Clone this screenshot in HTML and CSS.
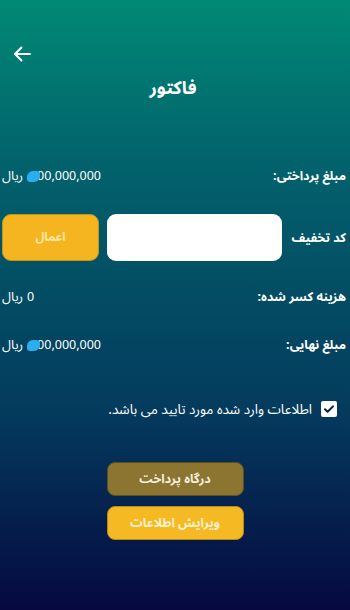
FILE: index.html
```html
<!DOCTYPE html>
<html lang="fa" dir="rtl">
<head>
    <meta charset="UTF-8">
    <meta name="viewport" content="width=device-width, initial-scale=1.0">
    <title>فاکتور</title>
    <link rel="stylesheet" href="styles.css">
</head>
<body>
    <div class="page">
        <div class="topbar">
            <button class="back-button" aria-label="بازگشت">
                <svg width="20" height="20" viewBox="0 0 20 20" fill="none" stroke="#ffffff" stroke-width="2" stroke-linecap="round" stroke-linejoin="round">
                    <path d="M18 10H3"/>
                    <path d="M9.5 3.5L3 10l6.5 6.5"/>
                </svg>
            </button>
        </div>

        <h1 class="title">فاکتور</h1>

        <div class="row first">
            <span class="label">مبلغ پرداختی:</span>
            <span class="value"><span class="unit">ریال</span><span class="blob"></span><span class="num">00,000,000</span></span>
        </div>

        <div class="row coupon">
            <span class="label">کد تخفیف</span>
            <input class="coupon-input" type="text">
            <button class="apply-button">اعمال</button>
        </div>

        <div class="row">
            <span class="label">هزینه کسر شده:</span>
            <span class="value"><span class="unit">ریال</span><span class="num">0</span></span>
        </div>

        <div class="row">
            <span class="label">مبلغ نهایی:</span>
            <span class="value"><span class="unit">ریال</span><span class="blob"></span><span class="num">00,000,000</span></span>
        </div>

        <label class="confirm">
            <span class="checkbox">
                <svg width="12" height="12" viewBox="0 0 12 12" fill="none" stroke="#0b1f45" stroke-width="2" stroke-linecap="round" stroke-linejoin="round">
                    <path d="M2 6.2l2.6 2.6L10 3.4"/>
                </svg>
            </span>
            <span>اطلاعات وارد شده مورد تایید می باشد.</span>
        </label>

        <div class="actions">
            <button class="action-button pay">درگاه پرداخت</button>
            <button class="action-button edit">ویرایش اطلاعات</button>
        </div>
    </div>
</body>
</html>
```

FILE: styles.css
```css
body {
    margin: 0;
    padding: 0;
    font-family: 'Noto Sans Arabic', 'Noto Naskh Arabic', 'DejaVu Sans', sans-serif;
    color: #ffffff;
}

.page {
    height: 610px;
    background: linear-gradient(180deg, #008a74 0%, #02646d 25%, #034b63 50%, #043a5d 68%, #06083f 100%);
    overflow: hidden;
}

.topbar {
    direction: ltr;
    padding: 42px 0 0 12px;
    height: 20px;
}

.back-button {
    background: none;
    border: none;
    padding: 0;
    width: 20px;
    height: 20px;
    cursor: pointer;
}

.title {
    margin: 14px 0 0 0;
    padding-right: 4px;
    text-align: center;
    font-size: 18px;
    font-weight: bold;
    line-height: 24px;
}

.row {
    display: flex;
    justify-content: space-between;
    align-items: center;
    padding: 0 4px 0 2px;
    height: 24px;
    margin-top: 24px;
    font-size: 12.5px;
}

.row.first {
    margin-top: 64px;
}

.label {
    font-weight: bold;
    white-space: nowrap;
}

.value {
    display: flex;
    direction: ltr;
    align-items: center;
    font-size: 12.5px;
}

.unit {
    margin-right: 4px;
    font-size: 13px;
}

.blob {
    display: inline-block;
    width: 13px;
    height: 11px;
    margin-right: -3px;
    background: #2aaef0;
    border-radius: 6px 4px 6px 3px;
    position: relative;
    z-index: 1;
}

.row.coupon {
    height: 47px;
    margin-top: 26px;
    gap: 8px;
}

.row.coupon .label {
    flex: 1;
}

.coupon-input {
    width: 175px;
    height: 47px;
    box-sizing: border-box;
    border: none;
    border-radius: 9px;
    background: #ffffff;
    margin: 0;
}

.apply-button {
    width: 97px;
    height: 47px;
    border: 1px solid #c7921a;
    border-radius: 9px;
    background: #f4b521;
    color: #fbe7a6;
    font-family: inherit;
    font-size: 12px;
    font-weight: bold;
    cursor: pointer;
}

.confirm {
    display: flex;
    align-items: center;
    gap: 9px;
    height: 24px;
    margin-top: 40px;
    padding-right: 13px;
    font-size: 13.5px;
}

.checkbox {
    display: flex;
    justify-content: center;
    align-items: center;
    width: 16px;
    height: 16px;
    background: #ffffff;
    border-radius: 2px;
}

.actions {
    display: flex;
    flex-direction: column;
    align-items: center;
    gap: 10px;
    margin-top: 41px;
}

.action-button {
    width: 137px;
    height: 34px;
    border-radius: 8px;
    font-family: inherit;
    font-size: 12.5px;
    font-weight: bold;
    cursor: pointer;
}

.action-button.pay {
    background: #8c7431;
    border: 1px solid #5f4f20;
    color: #f4efdf;
}

.action-button.edit {
    background: #f4b923;
    border: 1px solid #b98a18;
    color: #fff1cc;
}
```
